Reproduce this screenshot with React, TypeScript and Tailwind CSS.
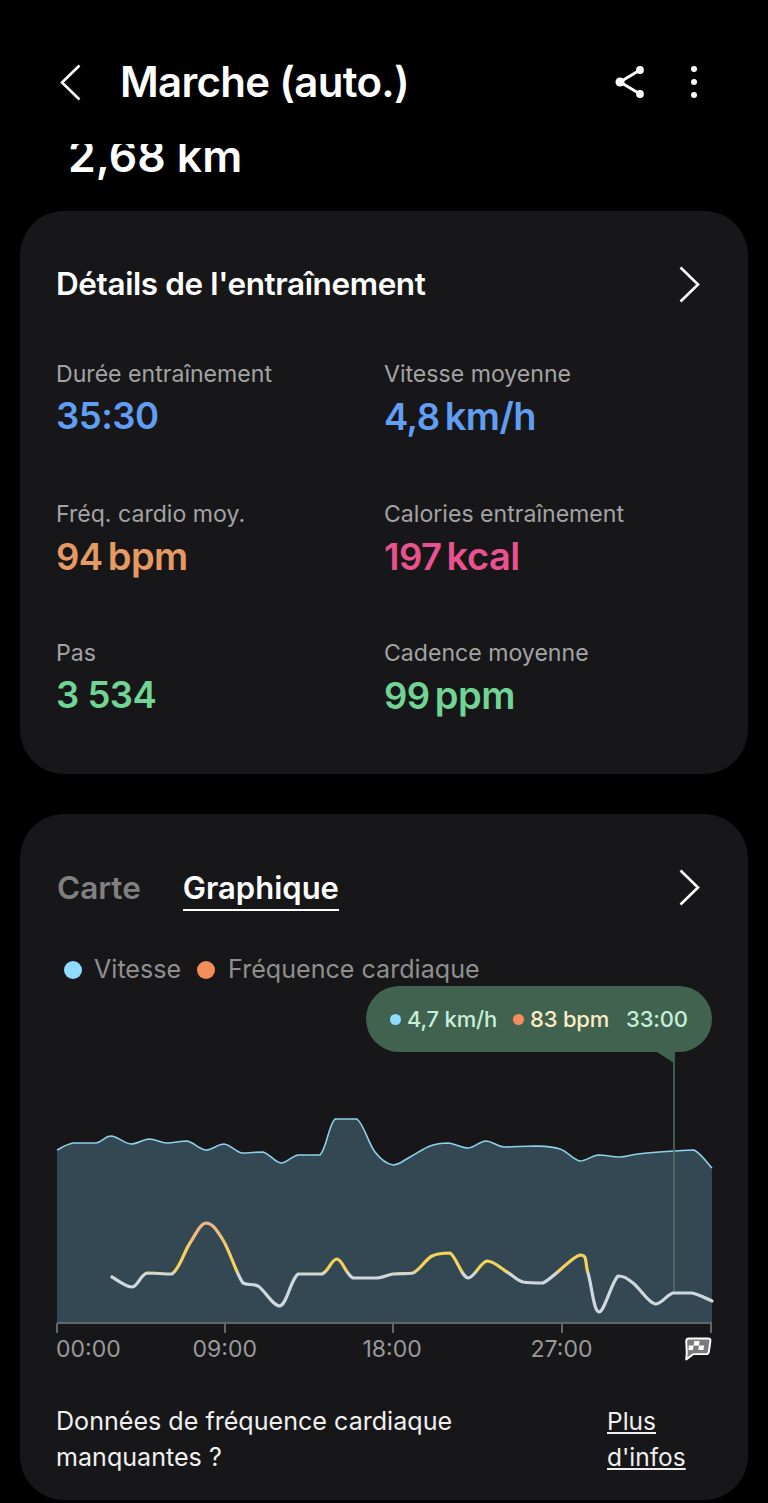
const speed: [number, number][] = [
  [57, 1150], [73, 1143], [96, 1143], [111, 1136], [131, 1144], [149, 1139], [167, 1143], [187, 1141],
  [206, 1150], [224, 1144], [242, 1153], [263, 1152], [281, 1163], [298, 1155], [320, 1155], [335, 1119],
  [357, 1119], [375, 1152], [393, 1165], [410, 1157], [430, 1146], [448, 1143], [468, 1148], [486, 1141],
  [504, 1147], [535, 1146], [560, 1149], [580, 1161], [598, 1155], [620, 1157], [638, 1154], [674, 1151],
  [694, 1150], [712, 1168],
];

const heart: [number, number][] = [
  [112, 1277], [132, 1287], [147, 1273], [172, 1274], [190, 1243], [206, 1223], [223, 1240], [243, 1283],
  [258, 1286], [280, 1306], [298, 1274], [322, 1274], [337, 1259], [353, 1278], [377, 1278], [393, 1274],
  [413, 1273], [432, 1256], [450, 1253], [468, 1278], [487, 1261], [507, 1272], [523, 1282], [543, 1283],
  [580, 1255], [588, 1273], [599, 1312], [618, 1276], [633, 1283], [655, 1304], [673, 1293], [692, 1293],
  [712, 1301],
];

const CHART_TOP = 1052;

const clamp = (v: number, a: number, b: number) => Math.min(Math.max(v, Math.min(a, b)), Math.max(a, b));

// courbe lissée, sans dépasser les points (plateaux bien plats)
function smooth(pts: [number, number][]) {
  let d = `M${pts[0][0]} ${pts[0][1] - CHART_TOP}`;
  for (let i = 0; i < pts.length - 1; i++) {
    const p0 = pts[Math.max(i - 1, 0)];
    const p1 = pts[i];
    const p2 = pts[i + 1];
    const p3 = pts[Math.min(i + 2, pts.length - 1)];
    const k = 0.18;
    const c1x = p1[0] + (p2[0] - p0[0]) * k;
    const c1y = clamp(p1[1] + (p2[1] - p0[1]) * k, p1[1], p2[1]) - CHART_TOP;
    const c2x = p2[0] - (p3[0] - p1[0]) * k;
    const c2y = clamp(p2[1] - (p3[1] - p1[1]) * k, p1[1], p2[1]) - CHART_TOP;
    d += ` C${c1x.toFixed(1)} ${c1y.toFixed(1)} ${c2x.toFixed(1)} ${c2y.toFixed(1)} ${p2[0]} ${p2[1] - CHART_TOP}`;
  }
  return d;
}

const stats = [
  { label: 'Durée entraînement', value: '35:30', color: 'text-[#609ef3]' },
  { label: 'Vitesse moyenne', value: '4,8', unit: 'km/h', color: 'text-[#609ef3]' },
  { label: 'Fréq. cardio moy.', value: '94', unit: 'bpm', color: 'text-[#e59a63]' },
  { label: 'Calories entraînement', value: '197', unit: 'kcal', color: 'text-[#e9528f]' },
  { label: 'Pas', value: '3 534', color: 'text-[#70d495]' },
  { label: 'Cadence moyenne', value: '99', unit: 'ppm', color: 'text-[#70d495]' },
];

function Chevron({ left = false }: { left?: boolean }) {
  return (
    <svg width="21" height="37" viewBox="0 0 21 37" fill="none" className="shrink-0">
      <path d={left ? 'M19.500 1.500 2 18.500l17.500 17' : 'M1.500 1.500 19 18.500 1.500 35.500'} stroke="#fff" strokeWidth="2.600" />
    </svg>
  );
}

function ShareIcon() {
  return (
    <svg width="32" height="32" viewBox="0 0 32 32" fill="none">
      <path d="M26 4 6 16l20 12" stroke="#fff" strokeWidth="2.800" />
      <circle cx="26" cy="4" r="3.900" fill="#fff" />
      <circle cx="6" cy="16" r="4.500" fill="#fff" />
      <circle cx="26" cy="28" r="3.900" fill="#fff" />
    </svg>
  );
}

function FinishFlag() {
  return (
    <svg width="30" height="26" viewBox="0 0 28 26" preserveAspectRatio="none" fill="none">
      <path
        d="M5.500 2.500h18c1.500 0 2.300 1 2.100 2.400l-1.500 11c-.2 1.400-1.200 2.300-2.600 2.300H9.500l-6.500 5.300 .5-6.500L3 5c.1-1.500 1-2.500 2.500-2.500Z"
        fill="#7c7c7e"
        stroke="#fff"
        strokeWidth="1.800"
        strokeLinejoin="round"
      />
      <path d="M10.500 5h5l-.6 4.500h-5ZM19.700 9.500l-.6 4.500h-4.800l.6-4.500ZM9.900 9.500l-.6 4.500H5l.5-4.500Z" fill="#fff" />
    </svg>
  );
}

function Chart() {
  const area = `${smooth(speed)} L712 271 L57 271 Z`;
  return (
    <div className="relative">
      {/* bulle */}
      <div className="absolute right-0 top-[-66px] flex h-[66px] w-[346px] items-center rounded-[33px] bg-[#41624f] pl-[24px] text-[22px] font-medium leading-none tracking-[-0.2px]">
        <span className="h-[11px] w-[11px] rounded-full bg-[#8fdcff]" />
        <span className="ml-[6px] text-[#c5efd9]">4,7 km/h</span>
        <span className="ml-[16px] h-[11px] w-[11px] rounded-full bg-[#f58d5a]" />
        <span className="ml-[6px] text-[#fbecc6]">83 bpm</span>
        <span className="ml-[17px] text-[#c5efd9]">33:00</span>
      </div>
      <svg width="768" height="290" viewBox="0 0 768 290" className="ml-[-20px] block" fill="none">
        <defs>
          <linearGradient id="hr" gradientUnits="userSpaceOnUse" x1="0" y1="170" x2="0" y2="225">
            <stop offset="0" stopColor="#eeb48a" />
            <stop offset="0.3" stopColor="#efbf78" />
            <stop offset="0.55" stopColor="#f4d35c" />
            <stop offset="0.88" stopColor="#f4d35c" />
            <stop offset="0.94" stopColor="#cfd8dc" />
            <stop offset="1" stopColor="#cfd8dc" />
          </linearGradient>
        </defs>
        <path d={area} fill="#334852" />
        <path d={smooth(speed)} stroke="#8fd0ea" strokeWidth="1.600" />
        <path d="M674 0V241" stroke="#4d7264" strokeWidth="1.500" />
        <path d="M657 0h17v11Z" fill="#41624f" />
        <path d={smooth(heart)} stroke="url(#hr)" strokeWidth="3.200" strokeLinecap="round" strokeLinejoin="round" />
        <path d="M57 271H712M57 271V281M225 271V281M393 271V281M562 271V281M711 271V281" stroke="#5f696d" strokeWidth="2" />
      </svg>
    </div>
  );
}

export default function App() {
  return (
    <div
      className="h-[1503px] w-[768px] overflow-hidden bg-black text-white"
      style={{ fontFamily: 'Inter, "Noto Sans", sans-serif' }}
    >
      <header className="flex h-[144px] items-start pt-[57px]">
        <div className="flex h-[50px] w-full items-center">
          <div className="ml-[60px]">
            <Chevron left />
          </div>
          <h1 className="ml-[39px] text-[42px] font-semibold leading-[50px] tracking-[-0.7px]">Marche (auto.)</h1>
          <div className="ml-auto mr-[71px] flex items-center gap-[45px]">
            <ShareIcon />
            <div className="flex flex-col gap-[7px]">
              <span className="h-[6px] w-[6px] rounded-full bg-white" />
              <span className="h-[6px] w-[6px] rounded-full bg-white" />
              <span className="h-[6px] w-[6px] rounded-full bg-white" />
            </div>
          </div>
        </div>
      </header>

      <div className="h-[67px] overflow-hidden pl-[68px]">
        <p className="mt-[-13px] text-[44.500px] font-semibold leading-[50px]">2,68 km</p>
      </div>

      <section className="mx-[20px] h-[563px] rounded-[44px] bg-[#171719] pl-[36px] pr-[36px] pt-[53px]">
        <div className="flex h-[40px] items-center justify-between">
          <h2 className="text-[31.500px] font-semibold leading-[40px] tracking-[-0.4px]">Détails de l'entraînement</h2>
          <div className="mr-[12px]">
            <Chevron />
          </div>
        </div>
        <div className="mt-[52px] grid grid-cols-[328px_1fr] gap-y-[54.500px]">
          {stats.map((s) => (
            <div key={s.label}>
              <p className="text-[23.100px] leading-[36px] text-[#a3a3a3]">{s.label}</p>
              <p className={`mt-[-1px] h-[50px] text-[36.500px] font-semibold leading-[50px] tracking-[-0.5px] ${s.color}`}>
                {s.value}
                {s.unit && <span className="ml-[5px] text-[38px]">{s.unit}</span>}
              </p>
            </div>
          ))}
        </div>
      </section>

      <section className="mx-[20px] mt-[40px] h-[686px] rounded-[44px] bg-[#171719] pl-[37px] pr-[36px] pt-[54px]">
        <div className="flex h-[43px] items-start">
          <span className="text-[31.500px] font-semibold leading-[40px] text-[#808080]">Carte</span>
          <span className="ml-[42px] border-b-[2px] border-white pb-[1px] text-[31px] font-semibold leading-[40px]">
            Graphique
          </span>
          <div className="ml-auto mr-[12px] mt-[1px]">
            <Chevron />
          </div>
        </div>

        <div className="mt-[41px] flex h-[36px] items-center text-[25.100px] text-[#8f8f8f]">
          <span className="ml-[7px] h-[18px] w-[18px] rounded-full bg-[#8fdcff]" />
          <span className="ml-[12px]">Vitesse</span>
          <span className="ml-[16px] h-[18px] w-[18px] rounded-full bg-[#f58d5a]" />
          <span className="ml-[13px]">Fréquence cardiaque</span>
        </div>

        <div className="mt-[64px] ml-[-37px]">
          <Chart />
        </div>

        <div className="relative mt-[-8px] h-[30px] text-[23px] leading-[30px] text-[#9a9a9a]">
          <div className="ml-[-1px] grid grid-cols-[136.500px_170px_168px_169px] justify-start">
            <span>00:00</span>
            <span>09:00</span>
            <span>18:00</span>
            <span>27:00</span>
          </div>
          <div className="absolute right-[-1px] top-[2px]">
            <FinishFlag />
          </div>
        </div>

        <div className="ml-[-1px] mt-[39px] flex justify-between text-[25.100px] leading-[36px] text-[#f0f0f0]">
          <p className="w-[420px]">Données de fréquence cardiaque manquantes ?</p>
          <a className="mr-[27px] w-[78px] text-[24.500px] underline">Plus d'infos</a>
        </div>
      </section>
    </div>
  );
}
